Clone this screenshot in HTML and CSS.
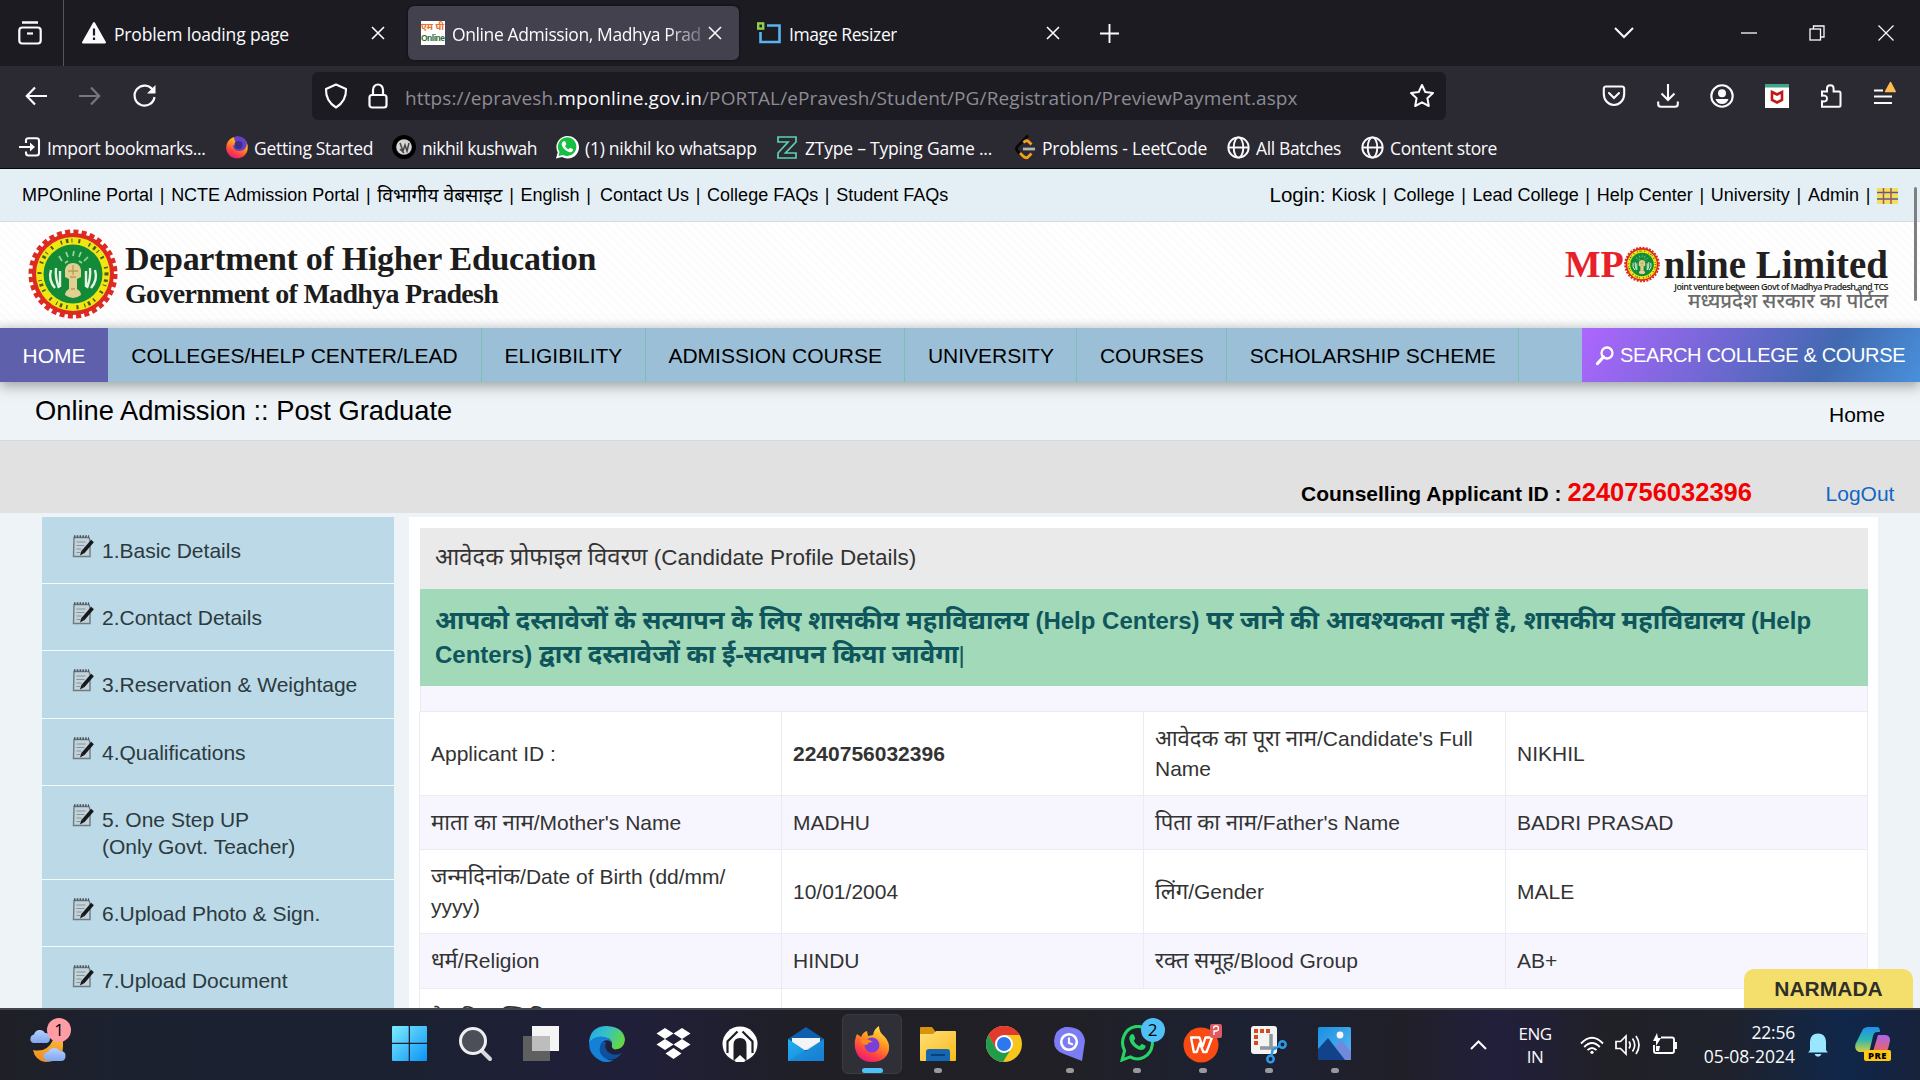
FILE: index.html
```html
<!DOCTYPE html>
<html lang="en">
<head>
<meta charset="utf-8">
<title>Online Admission, Madhya Pradesh</title>
<link rel="stylesheet" href="styles.css">
</head>
<body>
<svg class="defs" width="0" height="0">
  <defs>
    <linearGradient id="gMoon" x1="0" y1="0" x2="0" y2="1"><stop offset="0" stop-color="#f7c23c"/><stop offset="1" stop-color="#f08a1e"/></linearGradient>
    <linearGradient id="gCloud" x1="0" y1="0" x2="0" y2="1"><stop offset="0" stop-color="#b4d0ff"/><stop offset="1" stop-color="#7fa6ee"/></linearGradient>
    <linearGradient id="gWin" x1="0" y1="0" x2="1" y2="1"><stop offset="0" stop-color="#7cecff"/><stop offset="1" stop-color="#0a93f5"/></linearGradient>
    <linearGradient id="gEdge" x1="0" y1="0" x2="1" y2=".4"><stop offset="0" stop-color="#1fa5ea"/><stop offset=".5" stop-color="#35c1c8"/><stop offset="1" stop-color="#62d64b"/></linearGradient>
    <linearGradient id="gFox" x1=".8" y1="0" x2=".3" y2="1"><stop offset="0" stop-color="#fff04a"/><stop offset=".4" stop-color="#ff9a1f"/><stop offset=".75" stop-color="#ff4242"/><stop offset="1" stop-color="#e8177e"/></linearGradient>
    <linearGradient id="gFolder" x1="0" y1="0" x2="1" y2="1"><stop offset="0" stop-color="#ffdf75"/><stop offset="1" stop-color="#f9bb1c"/></linearGradient>
    <linearGradient id="gMail" x1="0" y1="0" x2="1" y2="1"><stop offset="0" stop-color="#1fb2f2"/><stop offset="1" stop-color="#1c7fd6"/></linearGradient>
    <linearGradient id="gPhoto" x1="0" y1="0" x2="1" y2="1"><stop offset="0" stop-color="#1a8fe0"/><stop offset="1" stop-color="#5cb8f5"/></linearGradient>
    <linearGradient id="gCop1" x1="0" y1="0" x2="0" y2="1"><stop offset="0" stop-color="#1f8ff0"/><stop offset=".5" stop-color="#2fb6b0"/><stop offset="1" stop-color="#d8cf3a"/></linearGradient>
    <linearGradient id="gCop2" x1="0" y1="0" x2="0" y2="1"><stop offset="0" stop-color="#a864f0"/><stop offset="1" stop-color="#f0645a"/></linearGradient>
    <symbol id="close" viewBox="0 0 14 14"><path d="M1 1l12 12M13 1L1 13" fill="none" stroke="#fbfbfe" stroke-width="1.600"/></symbol>
    <symbol id="globe" viewBox="0 0 24 24"><g fill="none" stroke="#fbfbfe" stroke-width="2"><circle cx="12" cy="12" r="10.600"/><ellipse cx="12" cy="12" rx="5" ry="10.600"/><path d="M1.500 12h21"/></g></symbol>
    <symbol id="whatsapp" viewBox="0 0 32 36"><path d="M2 34l2.400-9A14.500 15.800 0 1 1 10 31z" fill="none" stroke="#25d366" stroke-width="3"/><path d="M10.500 9.500c1-1.200 2.500-1 3 .2l1.200 3c.3.8-1 2-1.300 2.600 1 2.400 3 4.400 5.600 5.400l1.800-2.200c.6-.5 3.200 1 3.900 1.500.6 1.400-.8 4.300-4 4.400-5.600-.3-11.500-6.800-11.700-11.300 0-1.500.7-2.800 1.500-3.600z" fill="#25d366"/></symbol>
    <symbol id="note" viewBox="0 0 22 24">
      <path d="M2 3.500h15l1 3v16H1.500z" fill="#c4d2da" stroke="#6d7b84" stroke-width="1.400"/>
      <path d="M2 2.500h15" stroke="#4b555c" stroke-width="2.500" stroke-dasharray="1.500 1.300"/>
      <path d="M4.500 8h9M4.500 11.500h8M4.500 15h5M4.500 18.500h4" stroke="#86949c" stroke-width="1.200"/>
      <path d="M20.500 7L11 18" stroke="#15191c" stroke-width="3.600"/><path d="M8 21.500l1.500-5 3 2.500z" fill="#15191c"/>
    </symbol>
    <symbol id="emblem" viewBox="0 0 90 90">
      <circle cx="45" cy="45" r="41" fill="#dd2a22"/>
      <circle cx="45" cy="45" r="42" fill="none" stroke="#dd2a22" stroke-width="5" stroke-dasharray="5 3.250"/>
      <circle cx="45" cy="45" r="37" fill="#f0e614"/>
      <circle cx="45" cy="45" r="33.500" fill="none" stroke="#4a5a12" stroke-width="4" stroke-dasharray="1.500 4 2.500 3 1 6 2 9"/>
      <circle cx="45" cy="45" r="29.500" fill="#128a38"/>
      <path d="M23 41q-3 10 4 18M28 39q-1 10 3 20M32 42v16M67 41q3 10-4 18M62 39q1 10-3 20M58 42v16" fill="none" stroke="#e4f3e2" stroke-width="2.400"/>
      <path d="M31 27l3 5M38 23l2 5M46 22l-1 5M53 23l-2 5M60 28l-4 4M37 34l3-2M54 34l-3-2" stroke="#9ed3a0" stroke-width="1.700"/>
      <path d="M37 41q1-7 8-7t8 7v7l-4 2v10q4 2 4 6-8 6-16 0 0-4 4-6V50l-4-2z" fill="#e2cf92"/>
      <path d="M40 42h10M42 48h6M43 60h4M45 36v10" stroke="#b89d58" stroke-width="1.300"/>
    </symbol>
  </defs>
</svg>

<div class="tabbar">
  <div class="recent"><svg width="24" height="24" viewBox="0 0 24 24" fill="none" stroke="#fbfbfe" stroke-width="2.200"><path d="M4 1.500h16" stroke-width="2.500"/><rect x="1.300" y="6.500" width="21.400" height="16" rx="3"/><path d="M9 12.500h6"/></svg></div>
  <div class="tab tab-first">
    <svg width="24" height="22" viewBox="0 0 24 22"><path d="M12 1L23 20.500H1z" fill="#fbfbfe" stroke="#fbfbfe" stroke-width="2" stroke-linejoin="round"/><path d="M12 6.500v7M12 15.500v2.500" stroke="#1c1b22" stroke-width="2.200"/></svg>
    <span class="tab-title t1">Problem loading page</span>
    <svg class="x" width="14" height="14"><use href="#close"/></svg>
  </div>
  <div class="tab tab-active">
    <span class="fav"><b>एम पी</b><i>Online</i></span>
    <span class="tab-title t2">Online Admission, Madhya Prad</span>
    <svg class="x" width="14" height="14"><use href="#close"/></svg>
  </div>
  <div class="tab tab-third">
    <svg width="24" height="22" viewBox="0 0 24 22" fill="none"><rect x="1.200" y="1.400" width="5" height="5.200" stroke="#8fd14a" stroke-width="2.400"/><path d="M10 3.500h12.500v16.500H3.500V10" stroke="#5ab4f0" stroke-width="2.600"/></svg>
    <span class="tab-title t3">Image Resizer</span>
    <svg class="x" width="14" height="14"><use href="#close"/></svg>
  </div>
  <svg class="plus" width="19" height="19" viewBox="0 0 19 19"><path d="M9.500 0v19M0 9.500h19" stroke="#fbfbfe" stroke-width="1.900"/></svg>
  <div class="winctl">
    <svg width="20" height="14" viewBox="0 0 20 14"><path d="M1 2l9 9 9-9" fill="none" stroke="#fbfbfe" stroke-width="2"/></svg>
    <svg width="16" height="14" viewBox="0 0 16 14"><path d="M0 7h16" stroke="#fbfbfe" stroke-width="1.300"/></svg>
    <svg width="16" height="16" viewBox="0 0 16 16" fill="none" stroke="#fbfbfe" stroke-width="1.300"><rect x="1" y="4" width="10.500" height="11"/><path d="M4.500 4V1H15v11h-3.500"/></svg>
    <svg width="16" height="16" viewBox="0 0 16 16"><path d="M.5.5l15 15M15.500.5L.5 15.500" stroke="#fbfbfe" stroke-width="1.200"/></svg>
  </div>
</div>

<div class="toolbar">
  <div class="navbtns">
    <svg width="22" height="20" viewBox="0 0 22 20" fill="none" stroke="#fbfbfe" stroke-width="2.200"><path d="M22 10H2M10 1.500L1.800 10l8.200 8.500"/></svg>
    <svg width="22" height="20" viewBox="0 0 22 20" fill="none" stroke="#77767e" stroke-width="2.200"><path d="M0 10h20M12 1.500L20.200 10 12 18.500"/></svg>
    <svg width="24" height="24" viewBox="0 0 24 24"><path d="M20 6.200A10 10 0 1 0 21.500 13" fill="none" stroke="#fbfbfe" stroke-width="2.200"/><path d="M22.500 1v8.500H14z" fill="#fbfbfe"/></svg>
  </div>
  <div class="urlbar">
    <svg width="24" height="26" viewBox="0 0 24 26"><path d="M12 1.500L22 6q.5 12-10 18.500Q1.500 18 2 6z" fill="none" stroke="#fbfbfe" stroke-width="2.100" stroke-linejoin="round"/></svg>
    <svg class="lock" width="20" height="26" viewBox="0 0 20 26" fill="none" stroke="#fbfbfe" stroke-width="2.200"><rect x="1.500" y="12" width="17" height="12.500" rx="2.500"/><path d="M5 12V7a5 5.500 0 0 1 10 0v5"/></svg>
    <span class="url">https://epravesh.<b>mponline.gov.in</b>/PORTAL/ePravesh/Student/PG/Registration/PreviewPayment.aspx</span>
    <svg width="26" height="26" viewBox="0 0 26 26"><path d="M13 2l3.300 7 7.700 1-5.600 5.300L19.800 23 13 19.300 6.200 23l1.400-7.700L2 10l7.700-1z" fill="none" stroke="#fbfbfe" stroke-width="2" stroke-linejoin="round"/></svg>
  </div>
  <div class="exticons">
    <svg width="24" height="22" viewBox="0 0 24 22" fill="none" stroke="#fbfbfe" stroke-width="2.100" stroke-linecap="round"><path d="M4 1.500h16q2.200 0 2.200 2.500v5A10.200 11 0 0 1 1.800 9V4Q1.800 1.500 4 1.500z"/><path d="M7 8l5 5 5-5"/></svg>
    <svg width="22" height="24" viewBox="0 0 22 24" fill="none" stroke="#fbfbfe" stroke-width="2.100"><path d="M11 0v16M4.500 9.500L11 16l6.500-6.500M1.200 17.500V20q0 2.800 2.800 2.800h14q2.800 0 2.800-2.800v-2.500"/></svg>
    <svg width="24" height="24" viewBox="0 0 24 24"><circle cx="12" cy="12" r="10.700" fill="none" stroke="#fbfbfe" stroke-width="2.100"/><circle cx="12" cy="9.300" r="4" fill="#fbfbfe"/><path d="M5.500 15h13q-1.500 5-6.500 5t-6.500-5z" fill="#fbfbfe"/></svg>
    <svg width="24" height="24" viewBox="0 0 24 24"><path fill="#fff" d="M0 0h24v24H0z"/><path fill="#3fa58b" d="M0 0h24v3.500H0z"/><path d="M7 8l5 2.500L17 8v8l-5 2.500L7 16z" fill="none" stroke="#c01818" stroke-width="2.600"/></svg>
    <svg width="22" height="24" viewBox="0 0 22 24"><path d="M2 22.800v-5.500q5 .8 5-2.800t-5-2.800V7.500h5V4.500q0-3.300 3.300-3.300t3.300 3.300v3h5.400q1.500 0 1.500 1.500v12.300q0 1.500-1.500 1.500z" fill="none" stroke="#fbfbfe" stroke-width="2"/></svg>
    <svg width="24" height="24" viewBox="0 0 24 24"><path d="M1 6.500h9M1 12.500h18M1 19h18" stroke="#fbfbfe" stroke-width="2"/><path d="M17.500-1.500l4.700 9H12.500z" fill="#ffbd4f" stroke="#ffbd4f" stroke-width="1.500" stroke-linejoin="round"/></svg>
  </div>
</div>

<div class="bookmarks">
  <div><svg width="22" height="20" viewBox="0 0 22 20" fill="none" stroke="#fbfbfe" stroke-width="2.100"><path d="M7 6V3.500Q7 1.200 9.500 1.200h8q2.500 0 2.500 2.300v12.500q0 2.500-2.500 2.500h-8Q7 18.500 7 16v-1.500M0 10h14"/><path d="M11 5.500l5 4.500-5 4.500z" fill="#fbfbfe" stroke="none"/></svg><span class="b1">Import bookmarks...</span></div>
  <div><svg width="22" height="24" viewBox="0 0 22 24"><circle cx="11" cy="12.500" r="10.800" fill="url(#gFox)"/><path d="M8 2Q17-1 21 8q-1 9-9 8-5-1-5-6 4 2 5.500 0Q8 7 8 2z" fill="#6a3fc8"/><circle cx="12.500" cy="10" r="4" fill="#3e2f86"/></svg><span class="b2">Getting Started</span></div>
  <div><svg width="24" height="24" viewBox="0 0 24 24"><circle cx="12" cy="12" r="12" fill="#000"/><circle cx="12" cy="12" r="7.800" fill="#d4d4d4"/><path d="M8 8l3 8 2-6 2 6 2-8M8 14l4 4" stroke="#444" stroke-width="1.500" fill="none"/></svg><span class="b3">nikhil kushwah</span></div>
  <div><svg width="24" height="24" viewBox="0 0 24 24"><path d="M1 23.500l1.700-6A11.300 11.300 0 1 1 7 22z" fill="#fff"/><path d="M3.500 21l1-4A9.300 9.300 0 1 1 8 20z" fill="#16c042"/><path d="M8 6.500l2-.5 1.300 3.200L10 11q1.200 2.500 3.500 3.400l1.600-1.700 3 1.500q-.2 3.300-3.400 3Q8 15.500 6.700 9.500 6.700 7.500 8 6.500z" fill="#fff"/></svg><span class="b4">(1) nikhil ko whatsapp</span></div>
  <div><svg width="20" height="23" viewBox="0 0 20 23"><path d="M1 1h18v5L8.500 17H19v5H1v-5L11 6H1z" fill="none" stroke="#5fd0ae" stroke-width="1.700"/></svg><span class="b5">ZType – Typing Game ...</span></div>
  <div><svg width="21" height="24" viewBox="0 0 21 24" fill="none" stroke-width="2.800"><path d="M13 .5L2.500 11.500q-2 2 0 4.500l3 3.500" stroke="#080808"/><path d="M8.500 7.500q3-3 5-1l3 3M5 18l3 3q3 3 5 1l3.500-3.500" stroke="#f5a11c"/><path d="M8 14h12" stroke="#b4b4b4"/></svg><span class="b6">Problems - LeetCode</span></div>
  <div><svg width="23" height="23"><use href="#globe"/></svg><span class="b7">All Batches</span></div>
  <div><svg width="23" height="23"><use href="#globe"/></svg><span class="b8">Content store</span></div>
</div>

<div class="page">
  <div class="topbar">
    <div>MPOnline Portal<i>|</i>NCTE Admission Portal<i>|</i><span class="hi-top">विभागीय वेबसाइट</span><i>|</i>English<i class="wide">|</i>Contact Us<i>|</i>College FAQs<i>|</i>Student FAQs</div>
    <div class="right"><span class="login">Login:</span>Kiosk<i>|</i>College<i>|</i>Lead College<i>|</i>Help Center<i>|</i>University<i>|</i>Admin<i>|</i><svg width="21" height="16" viewBox="0 0 21 16"><path fill="#f0e060" d="M0 0h21v16H0z"/><path d="M0 4.500h21M0 11h21" stroke="#5d5790" stroke-width="1.500"/><path d="M6.500 0v16M14 0v16" stroke="#a8505c" stroke-width="1.500"/></svg></div>
  </div>
  <div class="banner">
    <svg width="90" height="90" preserveAspectRatio="none"><use href="#emblem"/></svg>
    <div class="dept"><div class="d1">Department of Higher Education</div><div class="d2">Government of Madhya Pradesh</div></div>
    <div class="mpo">
      <div class="mpo-row"><span class="mp">MP</span><svg width="36" height="37"><use href="#emblem"/></svg><span class="nline">nline Limited</span></div>
      <div class="joint">Joint venture between Govt of Madhya Pradesh and TCS</div>
      <div class="portal">मध्यप्रदेश सरकार का पोर्टल</div>
    </div>
  </div>
  <div class="menu">
    <a class="home">HOME</a><a class="first">COLLEGES/HELP CENTER/LEAD</a><a>ELIGIBILITY</a><a>ADMISSION COURSE</a><a>UNIVERSITY</a><a>COURSES</a><a>SCHOLARSHIP SCHEME</a>
    <div class="search"><svg width="18" height="19" viewBox="0 0 18 19" fill="none" stroke="#fff"><circle cx="11" cy="7" r="5.500" stroke-width="2.300"/><path d="M7.500 11L1.500 17.500" stroke-width="3.200" stroke-linecap="round"/></svg>SEARCH COLLEGE &amp; COURSE</div>
  </div>
  <div class="titlebar"><span class="title">Online Admission :: Post Graduate</span><span class="crumb">Home</span></div>
  <div class="idbar"><span class="cid">Counselling Applicant ID :</span><span class="num">2240756032396</span><span class="logout">LogOut</span></div>
  <div class="content">
    <ul class="side">
      <li><svg width="22" height="24"><use href="#note"/></svg><span>1.Basic Details</span></li>
      <li><svg width="22" height="24"><use href="#note"/></svg><span>2.Contact Details</span></li>
      <li><svg width="22" height="24"><use href="#note"/></svg><span>3.Reservation &amp; Weightage</span></li>
      <li><svg width="22" height="24"><use href="#note"/></svg><span>4.Qualifications</span></li>
      <li class="tall"><svg width="22" height="24"><use href="#note"/></svg><span>5. One Step UP<br>(Only Govt. Teacher)</span></li>
      <li><svg width="22" height="24"><use href="#note"/></svg><span>6.Upload Photo &amp; Sign.</span></li>
      <li><svg width="22" height="24"><use href="#note"/></svg><span>7.Upload Document</span></li>
    </ul>
    <div class="main">
      <div class="heading"><span class="hi">आवेदक प्रोफाइल विवरण</span> (Candidate Profile Details)</div>
      <div class="notice"><span class="hi">आपको दस्तावेजों के सत्यापन के लिए शासकीय महाविद्यालय</span> (Help Centers) <span class="hi">पर जाने की आवश्यकता नहीं है, शासकीय महाविद्यालय</span> (Help<br>Centers) <span class="hi">द्वारा दस्तावेजों का ई-सत्यापन किया जावेगा</span><span class="thin">|</span></div>
      <div class="strip"></div>
      <table>
        <tr class="two"><td>Applicant ID :</td><td><b>2240756032396</b></td><td><span class="hi">आवेदक का पूरा नाम</span>/Candidate's Full<br>Name</td><td>NIKHIL</td></tr>
        <tr class="alt"><td><span class="hi">माता का नाम</span>/Mother's Name</td><td>MADHU</td><td><span class="hi">पिता का नाम</span>/Father's Name</td><td>BADRI PRASAD</td></tr>
        <tr class="two"><td><span class="hi">जन्मदिनांक</span>/Date of Birth (dd/mm/<br>yyyy)</td><td>10/01/2004</td><td><span class="hi">लिंग</span>/Gender</td><td>MALE</td></tr>
        <tr class="alt last"><td><span class="hi">धर्म</span>/Religion</td><td>HINDU</td><td><span class="hi">रक्त समूह</span>/Blood Group</td><td>AB+</td></tr>
        <tr class="cut"><td><span class="hi">वैवाहिक स्थिति</span></td><td colspan="3"></td></tr>
      </table>
    </div>
  </div>
  <div class="scroll"></div>
  <div class="narmada">NARMADA</div>
</div>

<div class="taskbar">
  <div class="weather">
    <svg width="40" height="44" viewBox="0 0 40 44"><path d="M34 12v12q0 16-18 16Q6 38 4 28q14 3 20-10z" fill="url(#gMoon)"/><path d="M4 21a4.500 4.500 0 0 1 1-8.500 6 6 0 0 1 11-1.500q5 0 5 5t-4 5z" fill="url(#gCloud)"/><path d="M19 39a4.500 4.500 0 0 1 0-9 7 7 0 0 1 12-1q6 0 5.500 5.500-.5 4.500-4.500 4.500z" fill="url(#gCloud)"/></svg>
    <span class="badge pink">1</span>
  </div>
  <div class="apps">
    <div class="app"><svg width="35" height="35" viewBox="0 0 35 35"><path d="M0 1q0-1 1-1h15.700v16.700H0zM18 0h16q1 0 1 1v15.700H18zM0 18h16.700v17H1q-1 0-1-1zM18 18h17v16q0 1-1 1H18z" fill="url(#gWin)"/></svg></div>
    <div class="app"><svg width="35" height="36" viewBox="0 0 35 36"><path d="M24 25l8 8" stroke="#d8d8dc" stroke-width="4" stroke-linecap="round"/><circle cx="15" cy="15" r="12.500" fill="#4c4e58" stroke="#efeff2" stroke-width="3"/></svg></div>
    <div class="app"><svg width="36" height="35" viewBox="0 0 36 35"><path fill="#5f5f60" d="M0 10h27v25H0z"/><path fill="#f4f4f4" d="M9 0h27v25H9z"/><path fill="#bdbdbe" d="M9 10h18v15H9z"/></svg></div>
    <div class="app"><svg width="36" height="36" viewBox="0 0 36 36"><path d="M0 17Q1 0 18 0q17 1 18 14-1 9-10 9.500-4-1-3-5 0-6-7-7Q5 10 0 17z" fill="url(#gEdge)"/><path d="M0 17Q4 10 13 10.500q9 1 9 6-2-3-6-2-6 3-4 11 3 9 12 9-7 3-13 0Q0 29 0 17z" fill="#1580d8"/><path d="M13 16q-6 10 3 16 9 5 17-5-8 4-14-1-4-4-2-10z" fill="#0e4f9e"/></svg></div>
    <div class="app"><svg width="35" height="32" viewBox="0 0 35 32" fill="#fff"><path d="M9 0l8.500 5.500L9 11 .5 5.500zM26 0l8.500 5.500L26 11l-8.500-5.500zM9 11l8.500 5.500L9 22 .5 16.500zM26 11l8.500 5.500L26 22l-8.500-5.500zM17.500 20l8 5.500-8 5.500-8-5.500z"/></svg></div>
    <div class="app"><svg width="36" height="36" viewBox="0 0 36 36"><circle cx="18" cy="18" r="17.500" fill="#fff"/><path d="M11.500 35V19q0-7 6.500-7t6.500 7v16l-6.500-6z" fill="#1e1f26"/><path d="M13 36l5-6 5 6z" fill="#fff"/><path d="M5.500 27V15.500L15.500 5.500M30.500 27V15.500L20.500 5.500" fill="none" stroke="#1e1f26" stroke-width="2.200"/></svg></div>
    <div class="app"><svg width="36" height="34" viewBox="0 0 36 34"><path d="M0 12L18 0l18 12v4H0z" fill="#0f5fb0"/><path d="M4 11h28v12H4z" fill="#f2f4f7"/><path d="M0 12l18 12 18-12v22H0z" fill="url(#gMail)"/><path d="M18 23l18 11H0L36 12v22z" fill="#1577cc" opacity=".35"/></svg></div>
    <div class="app current"><svg width="36" height="36" viewBox="0 0 36 36"><path d="M3 8l4 3Q9 6 13 5l1 5 5-1Q20 3 25 0q0 6 5 10 6 6 5 14-3 12-17 12T1 22Q0 14 3 8z" fill="url(#gFox)"/><circle cx="18" cy="19" r="7.500" fill="#7a3fd6"/><path d="M7 15q6-4 12 1-5 0-6 3-4 0-6-4z" fill="#ff8a1c"/></svg><i class="wide-dot"></i></div>
    <div class="app"><svg width="36" height="34" viewBox="0 0 36 34"><path d="M0 1q0-1 1-1h11l3 4v5H0z" fill="#d9920c"/><path d="M0 7h13l3-3h19q1 0 1 1v28q0 1-1 1H1q-1 0-1-1z" fill="url(#gFolder)"/><path d="M6 34V25q0-3 3-3h18q3 0 3 3v9z" fill="#1467b0"/><path d="M11 28h14" stroke="#0a3f78" stroke-width="2"/></svg><i></i></div>
    <div class="app"><svg width="36" height="36" viewBox="0 0 36 36"><circle cx="18" cy="18" r="18" fill="#f8c51c"/><path d="M2.400 9A18 18 0 0 1 33.600 9H18l-8 14z" fill="#e23a2e"/><path d="M2.400 9A18 18 0 0 0 17 36l8-13-7 4-8-4z" fill="#1f9d4c"/><circle cx="18" cy="18" r="9" fill="#fff"/><circle cx="18" cy="18" r="7" fill="#2b78f0"/></svg></div>
    <div class="app"><svg width="34" height="36" viewBox="0 0 34 36"><path d="M12 1q18-1 20 14l-3 20L11 28Q1 25 1 15 2 3 12 1z" fill="#7c7cf5"/><circle cx="16" cy="16" r="7.800" fill="none" stroke="#fff" stroke-width="2.600"/><path d="M16 11.500V17l4 1.500" fill="none" stroke="#fff" stroke-width="2.200"/></svg><i></i></div>
    <div class="app"><svg width="37" height="37"><use href="#whatsapp"/></svg><span class="badge blue">2</span><i></i></div>
    <div class="app"><svg width="40" height="38" viewBox="0 0 40 38"><circle cx="18" cy="20" r="17.500" fill="#fa4a14"/><path d="M8 12.500h8.500l3 9 3-9H29L23.500 27h-3.200l-3.500-9-3 9h-3z" fill="none" stroke="#fff" stroke-width="2.300" stroke-linejoin="round"/><rect x="27" y="-1" width="12" height="14" rx="2" fill="#dd5a60"/><path d="M31 10V6h2a2.500 2.500 0 1 0-2.500-2.500" fill="none" stroke="#fff" stroke-width="1.300"/></svg><i></i></div>
    <div class="app"><svg width="37" height="38" viewBox="0 0 37 38"><rect x="1" y="1" width="26" height="28" rx="3" fill="#f3f3f3"/><path d="M4 4h4v4H4zM10 4h4v4h-4zM16 4h4v4h-4zM4 10h4v4H4zM4 16h4v4H4z" fill="#d8481c"/><path d="M21 9v14M10 23h16" stroke="#8e979c" stroke-width="3.500"/><g fill="none" stroke="#2b9be8" stroke-width="2.500"><circle cx="32.500" cy="19.500" r="3.200"/><circle cx="20.500" cy="34" r="3.200"/><path d="M29.500 21l-7 4-1 6"/></g></svg><i></i></div>
    <div class="app"><svg width="33" height="33" viewBox="0 0 33 33"><rect width="33" height="33" rx="1.500" fill="url(#gPhoto)"/><path d="M14 25L23 13l10 11v9H14z" fill="#7089dc"/><path d="M0 22L10 11l17 22H0z" fill="#12438a"/><circle cx="22" cy="8" r="3.400" fill="#f4f8fc"/></svg><i></i></div>
  </div>
  <div class="tray">
    <svg class="chev" width="17" height="10" viewBox="0 0 17 10"><path d="M1 9l7.500-7.500L16 9" fill="none" stroke="#fff" stroke-width="2"/></svg>
    <div class="lang">ENG<br>IN</div>
    <svg class="wifi" width="24" height="19" viewBox="0 0 24 19" fill="none" stroke="#fff" stroke-width="1.900"><path d="M1 7.500Q12-4 23 7.500M4.200 11q7.800-8 15.600 0M7.500 14.200q4.500-4.500 9 0"/><circle cx="12" cy="16.300" r="1.600" fill="#fff" stroke="none"/></svg>
    <svg class="spk" width="25" height="22" viewBox="0 0 25 22" fill="none" stroke="#fff" stroke-width="1.700"><path d="M1 7.500h4.500L11 2v18l-5.500-5.500H1zM14 7.500q2.500 3.500 0 7M17.500 4.500q4.500 6.500 0 13M21 2q6 9 0 18"/></svg>
    <svg class="bat" width="25" height="22" viewBox="0 0 25 22" fill="none" stroke="#fff" stroke-width="1.900"><path d="M9 3.500h11q2 0 2 2v11.500q0 2-2 2H4q-2 0-2-2V11M22.500 9H24v5h-1.500"/><path d="M5-1L1 7h3v5l5-8H6z" fill="#fff" stroke="none"/><path d="M4 17v-5h4l-1 5z" fill="#fff" stroke="none"/></svg>
    <div class="clock"><span class="c1">22:56</span><span class="c2">05-08-2024</span></div>
    <svg class="bell" width="20" height="24" viewBox="0 0 20 24" fill="#99e6ff"><path d="M2 17V8.500Q2.500.5 10 .5t8 8V17l1.800 2.500H.2zM6.500 21h7q-1 2.800-3.500 2.800T6.500 21z"/></svg>
    <div class="copilot"><svg width="36" height="26" viewBox="0 0 36 26"><path d="M8 2q2-2 5-2h9q3 0 3 5h-3q-3 0-4 4l-3 13q-1 3-4 3H4q-5-2-3.500-8z" fill="url(#gCop1)"/><path d="M23 8h8q4.500 1 4 6l-2 8q-1 2.500-4 2.500H18z" fill="url(#gCop2)"/></svg><span>PRE</span></div>
  </div>
</div>
</body>
</html>
```
FILE: styles.css
```css
* { box-sizing: border-box; }
html, body { margin: 0; width: 1920px; height: 1080px; overflow: hidden; }
body { display: flex; flex-direction: column; background: #1c1b22; font-family: "Open Sans", "Noto Sans", sans-serif; color: #fbfbfe; }
svg { display: block; flex: none; overflow: visible; }
.defs { position: absolute; }
i { font-style: normal; }

/* browser tabs */
.tabbar { height: 66px; flex: none; display: flex; background: #1c1b22; font-size: 17.5px; line-height: 24px; }
.recent { width: 64px; border-right: 1px solid #57565e; padding: 21px 0 0 18px; }
.tab { display: flex; align-items: center; height: 54px; margin-top: 6px; border-radius: 6px; white-space: nowrap; }
.tab .x { margin-left: auto; }
.tab-title { overflow: hidden; margin-left: 8px; padding-top: 1px; }
.tab-first { width: 333px; margin-right: 11px; padding: 0 12px 0 18px; }
.tab-active { width: 331px; padding: 0 17px 0 13px; background: #42414d; box-shadow: 0 0 3px #0b0b10; }
.tab-active .tab-title { margin-left: 7px; }
.tab-third { width: 330px; padding: 0 9px 0 18px; }
.t1 { letter-spacing: -.16px; }
.t2 { letter-spacing: -.39px; -webkit-mask-image: linear-gradient(90deg, #000 86%, rgba(0,0,0,.25)); mask-image: linear-gradient(90deg, #000 86%, rgba(0,0,0,.25)); }
.t3 { letter-spacing: -.4px; }
.fav { width: 24px; height: 24px; background: #fff; display: flex; flex-direction: column; overflow: hidden; flex: none; }
.fav b { font: 700 9.500px/12px "Noto Sans"; color: #e8762c; }
.fav i { font: 700 8.500px/11px "Liberation Sans"; letter-spacing: -.5px; color: #2f6a35; }
.plus { margin: 24px 0 0 31px; }
.winctl { display: flex; align-items: center; margin-left: auto; height: 66px; padding-right: 26px; }
.winctl svg:nth-child(1) { margin-right: 107px; }
.winctl svg:nth-child(2) { margin-right: 52px; }
.winctl svg:nth-child(3) { margin-right: 53px; }

/* address bar */
.toolbar { height: 60px; flex: none; display: flex; align-items: center; background: #2b2a33; }
.navbtns { width: 312px; display: flex; align-items: center; padding-left: 25px; gap: 32px; }
.urlbar { width: 1134px; height: 48px; display: flex; align-items: center; background: #1c1b22; border-radius: 6px; padding: 0 11px 0 12px; }
.lock { margin: 0 17px 0 20px; }
.url { flex: 1; font-size: 19px; line-height: 28px; letter-spacing: .12px; color: #8d8c93; white-space: nowrap; padding-top: 3px; }
.url b { font-weight: 400; color: #fbfbfe; }
.exticons { display: flex; align-items: center; margin-left: 156px; gap: 31px; }

/* bookmarks */
.bookmarks { height: 43px; flex: none; display: grid; grid-template-columns: 207px 166px 163px 222px 238px 212px 134px 200px; padding: 0 0 0 19px; align-items: center; background: #2b2a33; border-bottom: 1px solid #08080c; font-size: 17.5px; line-height: 24px; }
.bookmarks div { display: flex; align-items: center; gap: 6px; white-space: nowrap; }
.bookmarks span { padding-top: 1px; }
.b1 { letter-spacing: -.38px; }
.b2 { letter-spacing: -.30px; }
.b3 { letter-spacing: -.46px; }
.b4 { letter-spacing: -.26px; }
.b5 { letter-spacing: -.21px; margin-left: 2px; }
.b6 { letter-spacing: -.23px; }
.b7 { letter-spacing: -.36px; }
.b8 { letter-spacing: -.38px; }

/* web page */
.page { position: relative; height: 839px; flex: none; overflow: hidden; background: #edf3f6; color: #000; font-family: "Liberation Sans", "Noto Sans", sans-serif; }
.topbar { height: 53px; display: flex; justify-content: space-between; padding: 0 22px; background: #e4eff5; border-bottom: 1px solid #d9dbe3; font-size: 18px; line-height: 52px; white-space: nowrap; }
.topbar > div { display: flex; height: 52px; }
.topbar i { margin: 0 6.700px; }
.topbar i.wide { margin-right: 9px; }
.topbar .login { font-size: 20.500px; margin-right: 6px; }
.topbar .right svg { align-self: center; margin-top: 2px; }
.hi-top { font: 19.300px/52px "Noto Sans"; }
.banner { height: 106px; display: flex; padding: 7px 32px 0 28px; background: linear-gradient(0deg, #eceef0, rgba(255,255,255,0) 9px), repeating-linear-gradient(45deg, #fff 0 3px, #fcfcfc 3px 6px); }
.dept { font-family: "Liberation Serif"; font-weight: 700; margin-left: 7px; padding-top: 11px; white-space: nowrap; color: #1c1c1c; }
.d1 { font-size: 34px; line-height: 38px; letter-spacing: -.3px; }
.d2 { font-size: 28px; line-height: 32px; letter-spacing: -.7px; }
.mpo { margin-left: auto; display: flex; flex-direction: column; align-items: flex-end; padding-top: 18px; color: #231f20; white-space: nowrap; }
.mpo-row { display: flex; align-items: center; height: 35px; font: 700 38px/35px "Liberation Serif"; }
.mp { color: #e8202a; }
.nline { margin-left: 4px; font-size: 39px; }
.joint { font: 600 9px/9px "Open Sans"; letter-spacing: -.55px; }
.portal { font: 500 20.200px/18px "Noto Sans"; color: #6a6a6a; }
.menu { position: relative; height: 54px; display: flex; background: #9bbfd6; font-size: 21px; line-height: 55px; white-space: nowrap; box-shadow: 0 4px 12px rgba(80,80,80,.5); }
.menu a { padding: 0 22.500px; border-right: 1px solid #7cc0b4; }
.menu a.home { width: 108px; padding-right: 0; background: #5f60ac; color: #fff; border: 0; }
.menu a.first { padding: 0 23.300px; }
.search { width: 338px; margin-left: auto; display: flex; align-items: center; gap: 6px; padding-left: 14px; line-height: 57px; color: #fff; background: linear-gradient(120deg, #ae66ff, #4169b0 72%, #4a90dc); font-size: 20px; letter-spacing: -.36px; }
.titlebar { height: 58px; display: flex; justify-content: space-between; padding: 0 35px; }
.title { font-size: 27.300px; line-height: 58px; }
.crumb { font-size: 21px; line-height: 65px; }
.idbar { height: 73px; display: flex; align-items: baseline; background: #e1e1e1; border-top: 1px solid #d9d9d9; padding: 36px 0 0 1301px; font-size: 21px; line-height: 30px; font-weight: 700; white-space: nowrap; }
.num { font-size: 25.500px; color: #f40000; margin-left: 6px; width: 258px; }
.logout { color: #1267c4; font-weight: 400; }
.content { display: flex; padding: 4px 0 0 42px; height: 500px; }
.side { width: 352px; margin: 0 15px 0 0; padding: 0; list-style: none; background: #bbd9e6; font-size: 21px; line-height: 27px; color: #2c3a40; white-space: nowrap; }
.side li { height: 67.200px; border-bottom: 1.500px solid #f4fafc; display: flex; padding: 20px 0 0 30px; gap: 8px; }
.side li.tall { height: 94.500px; }
.side svg { margin-top: -3px; }
.main { width: 1469px; background: #fff; padding: 11px 10px 0 11px; color: #333; }
.heading { height: 61px; background: #eaeaea; padding-left: 15px; font-size: 22.500px; line-height: 60px; }
.heading .hi { font-size: 23.800px; }
.hi { font-family: "Noto Sans"; line-height: 1; }
.notice { height: 97px; background: #a2d9b8; padding: 15px 0 0 15px; font-size: 24px; line-height: 34px; font-weight: 700; color: #0f555c; white-space: nowrap; }
.notice .hi { font-size: 25.700px; }
.thin { font-weight: 400; }
.strip { height: 26px; background: #f7f6fe; border: 1px solid #ebebf1; border-top: 0; }
table { width: 1449px; margin-left: -1px; border-spacing: 0; table-layout: fixed; border-left: 1px solid #ebebf1; font-size: 21px; line-height: 30px; }
td { padding: 0 11px; border-right: 1px solid #ebebf1; border-bottom: 1px solid #ebebf1; vertical-align: middle; white-space: nowrap; }
td .hi { font-size: 22.100px; }
.two td { height: 84px; }
.alt td { height: 54px; background: #f7f6fe; }
.last td { height: 55px; }
.cut td { height: 70px; vertical-align: top; padding-top: 15px; }
.scroll { position: absolute; right: 3px; top: 18px; width: 3px; height: 114px; border-radius: 2px; background: #7c8083; }
.narmada { position: absolute; left: 1744px; top: 800px; width: 169px; height: 40px; border-radius: 10px 10px 0 0; background: #f5df6c; color: #2f2f2a; text-align: center; font-size: 21px; line-height: 39px; font-weight: 700; }

/* taskbar */
.taskbar { height: 72px; flex: none; display: flex; border-top: 2px solid #43444c; background: linear-gradient(90deg, #1f2026 0, #1c2130 6%, #1c2132 22%, #201f3a 33%, #1f1f25 42%, #202026 56%, #1c2133 65%, #201f28 73%, #221f3c 78%, #202026 84%, #1f222c 90%, #10274a 96%, #17213a 100%); }
.weather { position: relative; width: 379px; padding: 12px 0 0 29px; }
.badge { position: absolute; display: block; text-align: center; color: #000; border-radius: 50%; width: 24px; height: 24px; font-size: 17px; line-height: 23px; }
.pink { left: 47px; top: 8px; background: #ff9ca4; }
.blue { left: 34px; top: 4px; background: #4fc0f8; }
.apps { display: flex; width: 997px; gap: 6.150px; }
.app { position: relative; width: 60px; height: 60px; margin-top: 4px; display: flex; align-items: center; justify-content: center; padding-bottom: 1px; flex: none; }
.app i { position: absolute; left: 26px; bottom: 1px; width: 8px; height: 5px; border-radius: 3px; background: #98999e; }
.app i.wide-dot { left: 19px; bottom: 0; width: 21px; background: #4fc0f8; }
.current { background: #2f3037; border: 1px solid #3b3c43; border-radius: 6px; }
.tray { display: flex; align-items: center; flex: 1; padding-left: 94px; }
.tray > * { flex: none; }
.lang { width: 50px; margin-left: 23px; text-align: center; font-size: 17px; line-height: 23px; letter-spacing: -.5px; }
.wifi { margin-left: 20px; }
.spk { margin-left: 11px; }
.bat { margin-left: 12px; }
.clock { width: 104px; margin-left: 14px; display: flex; flex-direction: column; align-items: flex-end; font-size: 17.500px; line-height: 24px; margin-top: -3px; }
.c1 { letter-spacing: -.2px; }
.bell { margin-left: 13px; }
.copilot { margin-left: 27px; display: flex; flex-direction: column; align-items: flex-end; margin-top: -2px; }
.copilot span { margin-top: -3px; position: relative; width: 27px; height: 11px; border-radius: 2px; background: #ffc816; color: #000; text-align: center; font-size: 9.500px; line-height: 11px; font-weight: 800; letter-spacing: .5px; }
```
